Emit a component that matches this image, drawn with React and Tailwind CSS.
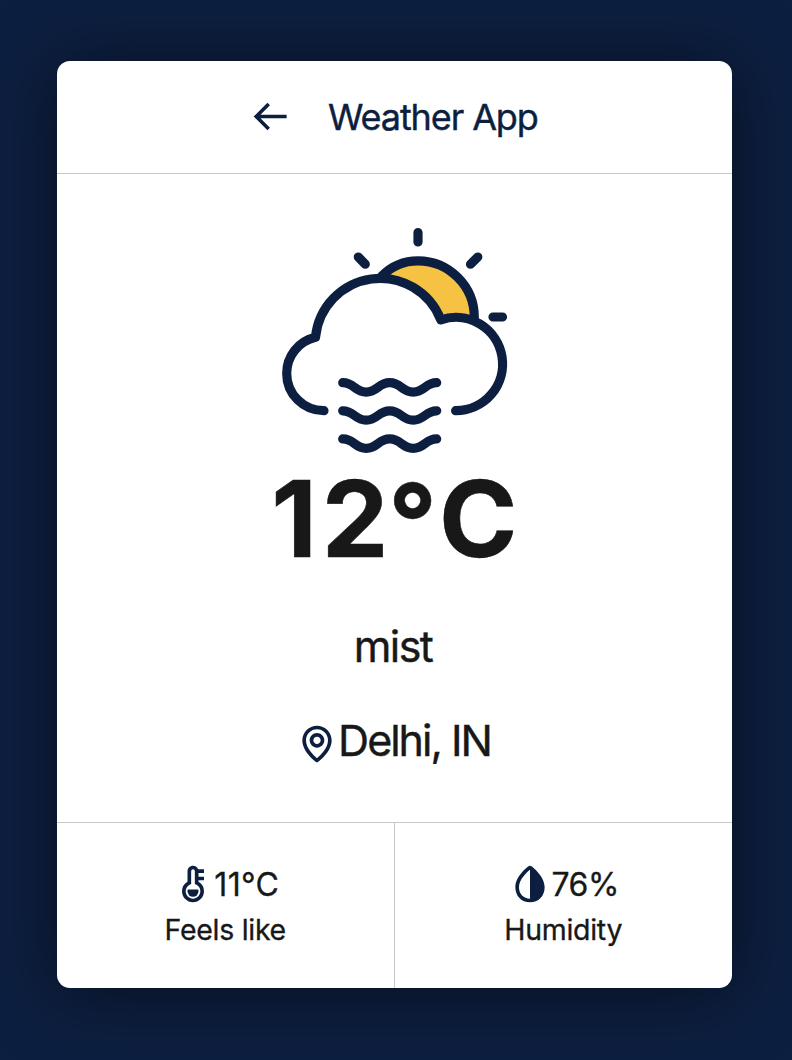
import { BiArrowBack, BiMap, BiSolidThermometer, BiSolidDropletHalf } from "react-icons/bi";

const WAVE = "c11.8 0 11.8 9.4 23.5 9.4s11.8-9.4 23.5-9.4s11.8 9.4 23.5 9.4s11.8-9.4 23.5-9.4";

function MistIcon() {
  return (
    <svg
      viewBox="270 220 250 240"
      className="block h-[240px] w-[250px]"
      fill="none"
      stroke="#0d1f40"
      strokeWidth="9.2"
      strokeLinecap="round"
      strokeLinejoin="round"
    >
      <path
        d="M381.8 276A50.7 50.7 0 0 1 418 260.8A56.5 56.5 0 0 1 474.2 319.5A46.5 46.5 0 0 0 441 320A65.2 65.2 0 0 0 380.5 279.5Z"
        fill="#f6c244"
        stroke="none"
      />
      <path d="M381.8 276A50.7 50.7 0 0 1 418 260.8A56.5 56.5 0 0 1 474.3 317.5" />
      <path d="M418 232.5V242M358.3 257L365.3 264.2M477.8 257L470.5 264.2M493 317H502.5" />
      <path d="M324 410.7A37.2 37.2 0 0 1 286.7 373.5A37 37 0 0 1 315.5 337.2A65 65 0 0 1 440.8 319.8A46.7 46.7 0 1 1 455.6 410.7" />
      <path d={"M342.7 382.7" + WAVE} />
      <path d={"M342.7 410.8" + WAVE} />
      <path d={"M342.7 438.9" + WAVE} />
    </svg>
  );
}

export default function App() {
  return (
    <div className="flex h-[1060px] w-[792px] items-start overflow-hidden bg-[#0d1f40] pt-[61px] pl-[57px] font-['Inter','Liberation_Sans',sans-serif] text-[#181818]">
      <main className="flex h-[927px] w-[675px] flex-col overflow-hidden rounded-[13px] bg-white shadow-[0_4px_70px_rgba(0,0,0,0.52)]">
        <header className="flex h-[113px] items-center border-b border-[#c8c8c8] pb-[2px] pl-[192px] text-[#0d1f40]">
          <BiArrowBack className="size-[43px]" />
          <h1 className="mt-[2px] ml-[36px] text-[36px] leading-[44px] tracking-[-1.1px] whitespace-nowrap [-webkit-text-stroke:0.4px]">Weather App</h1>
        </header>
        <section className="flex h-[648px] flex-col items-center pt-[46px]">
          <MistIcon />
          <p className="-mt-px -mr-[2px] flex text-[106px] leading-[120px] font-bold tracking-[2.2px] whitespace-nowrap [-webkit-text-stroke:0.5px]">
            <span className="tracking-[4.7px]">1</span>
            <span className="tracking-[-0.3px]">2</span>
            <span className="mt-[3px] -mb-[3px]">°</span>
            <span>C</span>
          </p>
          <p className="mt-[41px] mr-[3px] text-[43px] leading-[52px] tracking-[-1.6px] [-webkit-text-stroke:0.4px]">mist</p>
          <div className="mt-[41px] mr-[3px] flex items-center">
            <BiMap className="mt-[9px] size-[44px] text-[#0d1f40]" />
            <span className="-ml-px text-[43px] leading-[52px] tracking-[-2px] whitespace-nowrap [-webkit-text-stroke:0.4px]">Delhi, IN</span>
          </div>
        </section>
        <footer className="grid grow grid-cols-2 border-t border-[#c8c8c8]">
          <div className="flex flex-col items-center border-r border-[#c8c8c8] pt-[38px]">
            <div className="flex items-center">
              <BiSolidThermometer className="size-[44px] text-[#0d1f40]" />
              <span className="mt-[2px] -ml-px text-[32px] leading-[44px] tracking-[0.3px] [-webkit-text-stroke:0.3px]">11°C</span>
            </div>
            <span className="mt-px text-[28.5px] leading-[44px] tracking-[-0.3px] [-webkit-text-stroke:0.3px]">Feels like</span>
          </div>
          <div className="flex flex-col items-center pt-[38px]">
            <div className="flex items-center">
              <BiSolidDropletHalf className="ml-px size-[44px] text-[#0d1f40]" />
              <span className="mt-[2px] -ml-px text-[32px] leading-[44px] tracking-[-0.4px] [-webkit-text-stroke:0.3px]">76%</span>
            </div>
            <span className="mt-px text-[28.5px] leading-[44px] tracking-[-0.3px] [-webkit-text-stroke:0.3px]">Humidity</span>
          </div>
        </footer>
      </main>
    </div>
  );
}
